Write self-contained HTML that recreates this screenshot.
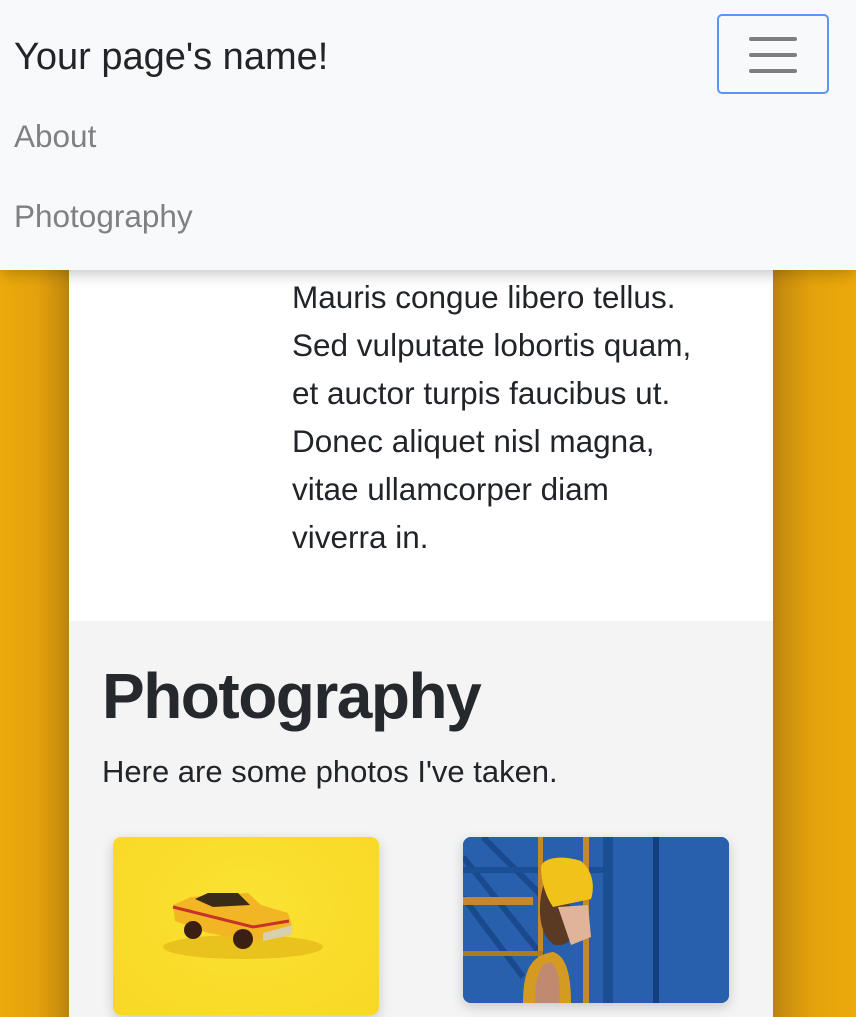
<!DOCTYPE html>
<html><head><meta charset="utf-8">
<style>
*{margin:0;padding:0;box-sizing:border-box}
html,body{width:856px;height:1017px;overflow:hidden;background:#eea90b;font-family:"Liberation Sans",sans-serif}
.gl{position:absolute;left:0;top:0;width:69px;height:1017px;background:linear-gradient(to right,#eeaa0b 0%,#e3a20c 55%,#c68c0e 90%,#b8820f 100%)}
.gr{position:absolute;left:773px;top:0;width:83px;height:1017px;background:linear-gradient(to left,#eeaa0b 0%,#e3a20c 55%,#c68c0e 90%,#b8820f 100%)}
.col{position:absolute;left:69px;top:0;width:704px;height:621px;background:#fff}
.sec{position:absolute;left:69px;top:621px;width:704px;height:396px;background:#f4f4f4}
.nav{position:absolute;left:0;top:0;width:856px;height:270px;background:#f8f9fa;box-shadow:0 4px 14px rgba(0,0,0,.22)}
.t{position:absolute;white-space:nowrap}
.brand{left:14px;top:32px;font-size:38px;color:#212529;line-height:50px}
.lnk{left:14px;font-size:31.5px;color:#808080;line-height:40px}
.btn{position:absolute;left:717px;top:14px;width:112px;height:80px;border:2px solid #5b95f5;border-radius:5px}
.bar{position:absolute;left:30px;width:48px;height:4px;border-radius:2px;background:#7f7f7f}
.body{left:292px;top:273px;font-size:31.5px;line-height:48px;color:#212529}
h1{position:absolute;left:102px;top:656px;font-size:64px;font-weight:bold;letter-spacing:-1.5px;color:#25282c;line-height:80px;white-space:nowrap}
.sub{left:102px;top:753px;font-size:31px;color:#212529;line-height:38px}
.card{position:absolute;border-radius:8px;overflow:hidden;box-shadow:0 4px 12px rgba(0,0,0,.18)}
</style></head><body>
<div class="gl"></div><div class="gr"></div>
<div class="col"></div>
<div class="t body">Mauris congue libero tellus.<br>Sed vulputate lobortis quam,<br>et auctor turpis faucibus ut.<br>Donec aliquet nisl magna,<br>vitae ullamcorper diam<br>viverra in.</div>
<div class="sec"></div>
<h1>Photography</h1>
<div class="t sub">Here are some photos I've taken.</div>
<div class="card" style="left:113px;top:837px;width:266px;height:178px;background:radial-gradient(ellipse at 50% 40%,#fbe233,#f8d824)">
<svg width="266" height="178" viewBox="0 0 266 178">
<ellipse cx="130" cy="110" rx="80" ry="12" fill="#e9c21d"/>
<path d="M60 68 L78 60 L100 58 L135 56 L148 68 L175 76 L180 92 L140 104 L95 96 L62 84 Z" fill="#f2b625"/>
<path d="M82 62 L95 56 L125 56 L137 68 L100 70 Z" fill="#3a2a18"/>
<path d="M60 70 L140 90 L176 84" stroke="#c8312a" stroke-width="3" fill="none"/>
<circle cx="80" cy="93" r="9" fill="#3b1e14"/><circle cx="130" cy="102" r="10" fill="#3b1e14"/>
<path d="M150 96 L180 88 L178 98 L150 104Z" fill="#d7cfae"/>
</svg></div>
<div class="card" style="left:463px;top:837px;width:266px;height:166px;background:#2860ad">
<svg width="266" height="166" viewBox="0 0 266 166">
<rect x="0" y="0" width="266" height="166" fill="#2860ad"/>
<path d="M0 20 L80 120 M0 60 L60 140 M20 0 L120 100" stroke="#1a4a8d" stroke-width="6"/>
<rect x="140" y="0" width="10" height="166" fill="#1a4f96"/>
<rect x="0" y="30" width="140" height="6" fill="#1a4f96"/>
<rect x="190" y="0" width="6" height="166" fill="#123f7d"/>
<rect x="75" y="0" width="5" height="166" fill="#c48a2a"/>
<rect x="120" y="0" width="6" height="166" fill="#c48a2a"/>
<rect x="0" y="60" width="70" height="8" fill="#c48a2a"/>
<rect x="0" y="114" width="80" height="5" fill="#b07a24"/>
<path d="M60 166 C60 130 70 118 90 115 C100 118 108 130 108 166Z" fill="#d49a22"/>
<path d="M72 166 C72 138 78 125 88 125 C95 130 98 145 96 166Z" fill="#c08a70"/>
<path d="M80 50 C74 70 76 100 92 108 C110 110 112 95 110 70 Z" fill="#5a3a22"/>
<path d="M95 70 L125 68 L128 100 L108 108 Z" fill="#e0b49a"/>
<path d="M78 30 C80 20 100 18 118 24 C130 34 132 50 128 62 L90 70 C82 58 78 44 78 30Z" fill="#f0c21a"/>
</svg></div>
<div class="nav"></div>
<div class="t brand">Your page's name!</div>
<div class="t lnk" style="top:116px">About</div>
<div class="t lnk" style="top:196px">Photography</div>
<div class="btn"><div class="bar" style="top:21px"></div><div class="bar" style="top:37px"></div><div class="bar" style="top:53px"></div></div>
</body></html>
